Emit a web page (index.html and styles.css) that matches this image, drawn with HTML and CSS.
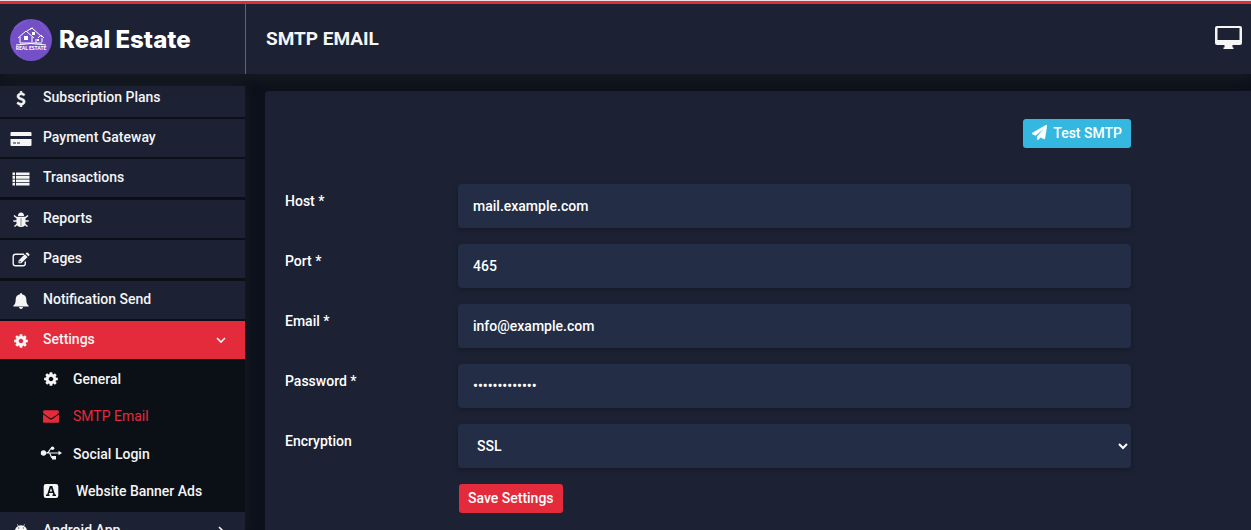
FILE: index.html
```html
<!DOCTYPE html>
<html lang="en">
<head>
<meta charset="utf-8">
<title>SMTP Email</title>
<link rel="stylesheet" href="styles.css">
</head>
<body>
<svg class="sprite" aria-hidden="true">
  <symbol id="cog" viewBox="0 0 1792 1792"><path d="M1152 896q0-106-75-181t-181-75-181 75-75 181 75 181 181 75 181-75 75-181zm512-109v222q0 12-8 23t-20 13l-185 28q-19 54-39 91 35 50 107 138 10 12 10 25t-9 23q-27 37-99 108t-94 71q-12 0-26-9l-138-108q-44 23-91 38-16 136-29 186-7 28-36 28h-222q-14 0-24.500-8.500t-11.500-21.500l-28-184q-49-16-90-37l-141 107q-10 9-25 9-14 0-25-11-126-114-165-168-7-10-7-23 0-12 8-23 15-21 51-66.500t54-70.500q-27-50-41-99l-183-27q-13-2-21-12.500t-8-23.500v-222q0-12 8-23t19-13l186-28q14-46 39-92-40-57-107-138-10-12-10-24 0-10 9-23 26-36 98.500-107.500t94.500-71.500q13 0 26 10l138 107q44-23 91-38 16-136 29-186 7-28 36-28h222q14 0 24.500 8.500t11.500 21.500l28 184q49 16 90 37l142-107q9-9 24-9 13 0 25 10 129 119 165 170 7 8 7 22 0 12-8 23-15 21-51 66.500t-54 70.500q26 50 41 98l183 28q13 2 21 12.500t8 23.500z"/></symbol>
</svg>
<header class="topbar">
  <a class="brand" href="#">
    <svg class="brand-mark" viewBox="0 0 42 42" aria-hidden="true">
      <circle cx="21" cy="21" r="21" fill="#7450c6"/>
      <path d="M4 9 17 1M2 27 10 38M29 2 41 18" stroke="#8060cf" stroke-width="1" fill="none"/>
      <g fill="none" stroke="#fff" stroke-width="1">
        <path d="M8 19l8-7 8 7M10 18v6M22 18v5M17 12l5-3 10 9M20 10l3-1M28 19l3-3 3 3M10 24h22M26 24v-4M32 23v-4"/>
        <path d="M6 26q15-3 30 0"/>
      </g>
      <path d="M14 17h4v4h-4zM22 13h3v3h-3zM27 20h2v2h-2z" fill="#fff"/>
      <text x="21" y="31" text-anchor="middle" class="brand-small">REAL ESTATE</text>
    </svg>
    <span class="brand-name">Real Estate</span>
  </a>
  <div class="titlebar">
    <h1 class="title">SMTP EMAIL</h1>
    <a class="screen-link" href="#" aria-label="View site">
      <svg viewBox="0 0 27 24" class="screen-icon" aria-hidden="true"><path fill-rule="evenodd" d="M2 0h23q2 0 2 2v15q0 2-2 2h-7.500v2.500h1V23h-10v-1.500h1V19H2q-2 0-2-2V2Q0 0 2 0zm.5 2v12h22V2z"/></svg>
    </a>
  </div>
</header>
<div class="layout">
  <nav class="sidebar" aria-label="Main">
    <ul class="menu">
      <li class="item"><a class="link" href="#"><svg class="icon" viewBox="0 0 1792 1792"><path d="M1362 1185q0 153-99.500 263.500t-258.500 136.500v175q0 14-9 23t-23 9h-135q-13 0-22.500-9.500t-9.500-22.500v-175q-66-9-127.500-31t-101.500-44.500-74-48-46.500-37.500-17.500-18q-17-21-2-41l103-135q7-10 23-12 15-2 24 9l2 2q113 99 243 125 37 8 74 8 81 0 142.500-43t61.500-122q0-28-15-53t-33.500-42-58.500-37.500-66-32-80-32.500q-39-16-61.500-25t-61.500-26.500-62.500-31-56.500-35.500-53.500-42.500-43.500-49-35.500-58-21-66.500-8.500-78q0-138 98-242t255-134v-180q0-13 9.500-22.500t22.500-9.500h135q14 0 23 9t9 23v176q57 6 110.500 23t87 33.500 63.500 37.500 39 29 15 14q17 18 5 38l-81 146q-8 15-23 16-14 3-27-7-3-3-14.500-12t-39-26.500-58.500-32-74.500-26-85.500-11.500q-95 0-155 43t-60 111q0 26 8.500 48t29.500 41.500 39.500 33 56 31 60.500 27 70 27.500q53 20 81 31.500t76 35 75.500 42.500 62 50 53 63.500 31.500 76.500 13 94z" stroke="currentColor" stroke-width="60"/></svg>Subscription Plans</a></li>
      <li class="item"><a class="link" href="#"><svg class="icon" viewBox="0 0 22 16"><path fill-rule="evenodd" d="M1.500 1h19q1 0 1 1v3h-21V2q0-1 1-1zM.5 8h21v6q0 1-1 1h-19q-1 0-1-1zM3 11.500v1h3v-1zm4 0v1h3v-1z"/></svg>Payment Gateway</a></li>
      <li class="item"><a class="link" href="#"><svg class="icon" viewBox="0 0 22 16"><path d="M2.500 1.500H5v2.700H2.500zM6 1.500h13.500v2.700H6zM2.500 5H5v2.700H2.500zM6 5h13.500v2.700H6zM2.500 8.500H5v2.700H2.500zM6 8.500h13.500v2.700H6zM2.500 12H5v2.500H2.500zM6 12h13.500v2.500H6z"/></svg>Transactions</a></li>
      <li class="item"><a class="link" href="#"><svg class="icon" viewBox="0 0 22 16"><path d="M8 4q0-3.500 3-3.500t3 3.500z"/><path d="M6.500 4.700h9V11q0 4-4.500 4t-4.500-4z"/><path d="M4 3.500 7 6M18 3.500 15 6M3.300 9H7M18.700 9H15M4.500 14.500 8 11.500M17.500 14.500 14 11.500" fill="none" stroke="currentColor" stroke-width="1.500"/><path d="M10.500 6h1v8h-1z" fill="#8b8e98"/></svg>Reports</a></li>
      <li class="item"><a class="link" href="#"><svg class="icon" viewBox="0 0 22 16"><path d="M14 2.300H5.500q-2.300 0-2.300 2.300v6.800q0 2.300 2.300 2.300H13q2.300 0 2.300-2.300V9.500" fill="none" stroke="currentColor" stroke-width="1.400"/><path fill-rule="evenodd" d="M8.500 8.500 14.800 2.200l2.800 2.800-6.300 6.300H8.500zm1 .7v1.100h1.100l.4-.4-1.100-1.100zM15.500 1.500l.9-.8q.7-.6 1.400 0l1.400 1.400q.6.700 0 1.400l-.9.800z"/></svg>Pages</a></li>
      <li class="item"><a class="link" href="#"><svg class="icon" viewBox="0 0 22 16"><path d="M11 0q1 0 1 1.200c3 .5 4.300 2.700 4.300 5.300 0 3.500.9 4.900 2.400 6.200v.8H3.300v-.8c1.500-1.300 2.400-2.700 2.400-6.200 0-2.600 1.300-4.800 4.300-5.300Q10 0 11 0zM9 14h4q-.2 2-2 2t-2-2z"/></svg>Notification Send</a></li>
      <li class="item open"><a class="link active" href="#"><svg class="icon" viewBox="0 0 1792 1792"><use href="#cog"/></svg>Settings<svg class="caret" viewBox="0 0 10 10"><path d="M1 3l4 4 4-4"/></svg></a>
        <ul class="submenu">
          <li><a class="sublink" href="#"><svg class="icon" viewBox="0 0 1792 1792"><use href="#cog"/></svg>General</a></li>
          <li><a class="sublink current" href="#"><svg class="icon" viewBox="0 0 1792 1792"><path d="M1792 710v794q0 66-47 113t-113 47h-1472q-66 0-113-47t-47-113v-794q44 49 101 87 362 246 497 345 57 42 92.500 65.500t94.500 48 110 24.500h2q51 0 110-24.500t94.500-48 92.500-65.500q170-123 498-345 57-39 100-87zm0-294q0 79-49 151t-122 123q-376 261-468 325-10 7-42.500 30.500t-54 38-52 32.500-57.500 27-50 9h-2q-23 0-50-9t-57.500-27-52-32.500-54-38-42.500-30.500q-91-64-262-182.500t-205-142.500q-62-42-117-115.500t-55-136.500q0-78 41.500-130t118.500-52h1472q65 0 112.500 47t47.500 113z"/></svg>SMTP Email</a></li>
          <li><a class="sublink" href="#"><svg class="icon" viewBox="0 0 22 16"><circle cx="3.500" cy="7" r="2.700"/><circle cx="12.500" cy="2.300" r="1.800"/><path d="M12 10h4v3.500h-4zM18.500 4.800 22 7l-3.500 2.200z"/><path d="M4 7h15M6.500 7Q8.500 7 9.500 4.500T12 2.300M9 7q1 0 1.700 2.500T13 12" fill="none" stroke="currentColor" stroke-width="1.200"/></svg>Social Login</a></li>
          <li><a class="sublink wide" href="#"><svg class="icon" viewBox="0 0 22 16"><path fill-rule="evenodd" d="M6 1h10q2.300 0 2.300 2.300v9.400Q18.300 15 16 15H6q-2.300 0-2.300-2.300V3.300Q3.700 1 6 1zm3.800 2-2.600 8.500H6V13h3.500v-1.500H8.700l.5-1.500h3.600l.5 1.500h-.8V13H16v-1.500h-1L12.300 3zm1.200 2 1.200 3.600H9.800z"/></svg>Website Banner Ads</a></li>
        </ul>
      </li>
      <li class="item"><a class="link" href="#"><svg class="icon" viewBox="0 0 22 16"><path fill-rule="evenodd" d="M5 6q.4-2.700 3-4L7 .3l.4-.3 1.100 1.700q2.500-.8 5 0L14.600 0l.4.300L14 2q2.600 1.300 3 4zm3.200-2.500v1h1v-1zm4.600 0v1h1v-1zM5 7h12v6H5zM2.500 7H4v5H2.500zM18 7h1.500v5H18z"/></svg>Android App<svg class="caret" viewBox="0 0 10 10"><path d="M3 1l4 4-4 4"/></svg></a></li>
    </ul>
  </nav>
  <main class="content">
    <form class="card">
      <div class="actions">
        <button class="btn btn-info" type="button"><svg class="plane" viewBox="0 0 1792 1792" aria-hidden="true"><path d="M1764 11q33 24 27 64l-256 1536q-5 29-32 45-14 8-31 8-11 0-24-5l-453-185-242 295q-18 23-49 23-13 0-22-4-19-7-30.500-23.500t-11.500-36.500v-349l864-1059-1069 925-395-162q-37-14-40-55-2-40 32-59l1664-960q15-9 32-9 20 0 36 11z" stroke="currentColor" stroke-width="50"/></svg>Test SMTP</button>
      </div>
      <div class="row"><label class="label" for="host">Host *</label><input class="field" id="host" type="text" value="mail.example.com"></div>
      <div class="row"><label class="label" for="port">Port *</label><input class="field" id="port" type="text" value="465"></div>
      <div class="row"><label class="label" for="email">Email *</label><input class="field" id="email" type="text" value="info@example.com"></div>
      <div class="row"><label class="label" for="password">Password *</label><input class="field" id="password" type="password" value="mailpassword1"></div>
      <div class="row"><label class="label" for="encryption">Encryption</label><select class="field" id="encryption"><option>SSL</option><option>TLS</option></select></div>
      <div class="row"><button class="btn btn-save" type="submit">Save Settings</button></div>
    </form>
  </main>
</div>
</body>
</html>
```
FILE: styles.css
```css
* { box-sizing: border-box; }

body {
  display: flex;
  flex-direction: column;
  height: 100vh;
  margin: 0;
  overflow: hidden;
  border-top: 1px solid #e4e4e4;
  background: #0c111b;
  color: #f5f5f5;
  font: 500 14px/20px Roboto, sans-serif;
}

.sprite { display: none; }
a { color: inherit; text-decoration: none; }
ul { margin: 0; padding: 0; list-style: none; }
svg { fill: currentColor; flex: none; }

.topbar {
  z-index: 1;
  display: flex;
  flex: none;
  height: 73px;
  border-top: 3px solid #e32b3c;
  background: #1c2233;
  box-shadow: 0 2px 14px #1b2027;
}
.brand {
  display: flex;
  align-items: center;
  gap: 7px;
  width: 246px;
  padding: 2px 0 0 10px;
  border-right: 1px solid #e32b3c;
}
.brand-mark { width: 42px; height: 42px; }
.brand-small { fill: #fff; font: 900 5px Lato, sans-serif; }
.brand-name { color: #fff; font: 800 24px/32px Inter, sans-serif; }
.titlebar {
  display: flex;
  flex: 1;
  align-items: center;
  justify-content: space-between;
  padding: 0 9px 0 20px;
}
.title { margin: 0; font: 700 19px/24px Roboto, sans-serif; }
.screen-link { display: flex; padding-bottom: 2px; }
.screen-icon { width: 27px; height: 24px; }

.layout { display: flex; flex: 1; min-height: 0; }
.sidebar {
  width: 245px;
  margin-top: 12px;
  overflow: hidden;
  background: #0b1016;
  box-shadow: 0 0 12px #191e25;
}
.menu { margin-top: -7px; }
.item { margin-bottom: 2px; }
.item:nth-child(3), .item:nth-child(5) { margin-bottom: 3px; }
.item.open { margin-bottom: 0; }
.link {
  display: flex;
  align-items: center;
  gap: 11px;
  height: 38px;
  padding: 0 19px 2px 10px;
  background: #1c2233;
}
.link.active { background: #e32b3c; }
.icon { width: 22px; height: 16px; margin-top: 3px; }
.caret {
  width: 10px;
  height: 10px;
  margin-top: 2px;
  margin-left: auto;
  fill: none;
  stroke: currentColor;
  stroke-width: 1.6;
}
.submenu { padding: 1px 0 3px; }
.submenu li:nth-child(2) { margin-bottom: 1px; }
.sublink {
  display: flex;
  align-items: center;
  gap: 11px;
  height: 37px;
  padding-left: 40px;
}
.sublink .icon { margin-top: 0; }
.sublink.wide { gap: 14px; }
.sublink.current { color: #e32b3c; font-weight: 400; }

.content { display: flex; flex: 1; padding: 17px 0 0 20px; }
.card {
  display: flex;
  flex: 1;
  flex-direction: column;
  gap: 16px;
  padding: 28px 120px 0 20px;
  border-radius: 4px 0 0 0;
  background: #1c2233;
}
.actions { display: flex; justify-content: flex-end; margin-bottom: 20px; }
.row { display: flex; align-items: flex-start; }
.label { width: 173px; padding-top: 7px; color: #fff; }
.field {
  flex: 1;
  min-width: 0;
  height: 44px;
  padding: 0 15px;
  border: 0;
  border-radius: 4px;
  background-color: #232d45;
  box-shadow: 0 2px 5px #151a28;
  color: #fff;
  font: inherit;
}
select.field { padding: 0 1px 0 15px; }
.btn {
  display: flex;
  align-items: center;
  gap: 6px;
  height: 29px;
  padding: 0 9px 2px;
  border: 0;
  border-radius: 3px;
  color: #fff;
  font: inherit;
}
.btn-info { background: #35b8e0; }
.btn-save { margin-left: 174px; background: #e32b3c; }
.plane { width: 15px; height: 15px; }
```
